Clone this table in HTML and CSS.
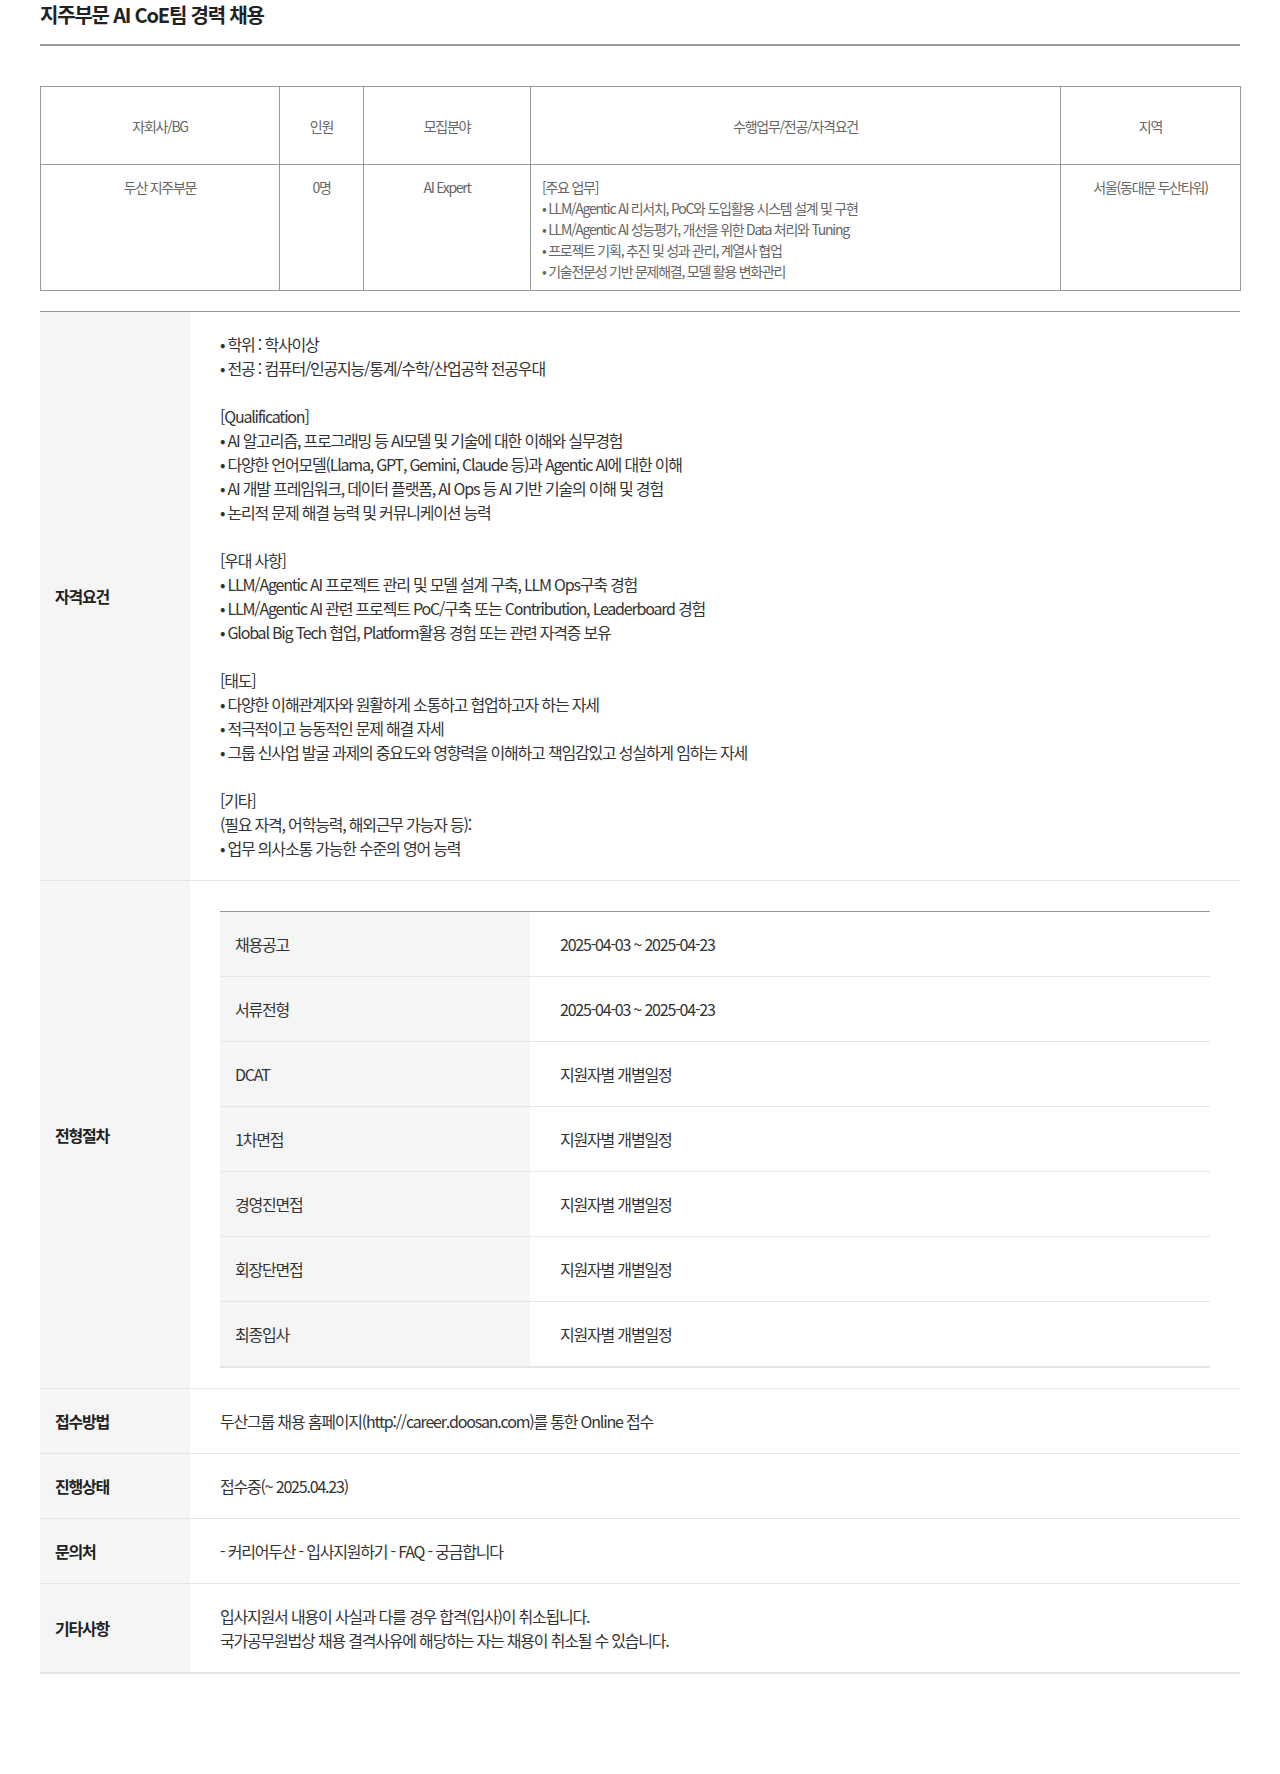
FILE: index.html
```html
<!DOCTYPE html>
<html lang="ko">
<head>
<meta charset="utf-8">
<title>지주부문 AI CoE팀 경력 채용</title>
<link rel="stylesheet" href="styles.css">
</head>
<body>
<div class="page">
  <h2 class="title">지주부문 AI CoE팀 경력 채용</h2>

  <table class="summary">
    <colgroup>
      <col class="c-company"><col class="c-count"><col class="c-field"><col class="c-duty"><col class="c-region">
    </colgroup>
    <thead>
      <tr>
        <th>자회사/BG</th>
        <th>인원</th>
        <th>모집분야</th>
        <th>수행업무/전공/자격요건</th>
        <th>지역</th>
      </tr>
    </thead>
    <tbody>
      <tr>
        <td>두산 지주부문</td>
        <td>0명</td>
        <td>AI Expert</td>
        <td class="duty">
          [주요 업무]<br>
          • LLM/Agentic AI 리서치, PoC와 도입활용 시스템 설계 및 구현<br>
          • LLM/Agentic AI 성능평가, 개선을 위한 Data 처리와 Tuning<br>
          • 프로젝트 기획, 추진 및 성과 관리, 계열사 협업<br>
          • 기술전문성 기반 문제해결, 모델 활용 변화관리
        </td>
        <td>서울(동대문 두산타워)</td>
      </tr>
    </tbody>
  </table>

  <table class="details">
    <tbody>
      <tr>
        <th>자격요건</th>
        <td>
          <div class="group">
            <p>• 학위 : 학사이상</p>
            <p>• 전공 : 컴퓨터/인공지능/통계/수학/산업공학 전공우대</p>
          </div>
          <div class="group">
            <p>[Qualification]</p>
            <p>• AI 알고리즘, 프로그래밍 등 AI모델 및 기술에 대한 이해와 실무경험</p>
            <p>• 다양한 언어모델(Llama, GPT, Gemini, Claude 등)과 Agentic AI에 대한 이해</p>
            <p>• AI 개발 프레임워크, 데이터 플랫폼, AI Ops 등 AI 기반 기술의 이해 및 경험</p>
            <p>• 논리적 문제 해결 능력 및 커뮤니케이션 능력</p>
          </div>
          <div class="group">
            <p>[우대 사항]</p>
            <p>• LLM/Agentic AI 프로젝트 관리 및 모델 설계 구축, LLM Ops구축 경험</p>
            <p>• LLM/Agentic AI 관련 프로젝트 PoC/구축 또는 Contribution, Leaderboard 경험</p>
            <p>• Global Big Tech 협업, Platform활용 경험 또는 관련 자격증 보유</p>
          </div>
          <div class="group">
            <p>[태도]</p>
            <p>• 다양한 이해관계자와 원활하게 소통하고 협업하고자 하는 자세</p>
            <p>• 적극적이고 능동적인 문제 해결 자세</p>
            <p>• 그룹 신사업 발굴 과제의 중요도와 영향력을 이해하고 책임감있고 성실하게 임하는 자세</p>
          </div>
          <div class="group">
            <p>[기타]</p>
            <p>(필요 자격, 어학능력, 해외근무 가능자 등):</p>
            <p>• 업무 의사소통 가능한 수준의 영어 능력</p>
          </div>
        </td>
      </tr>
      <tr>
        <th>전형절차</th>
        <td class="process-cell">
          <table class="process">
            <tbody>
              <tr><th>채용공고</th><td>2025-04-03 ~ 2025-04-23</td></tr>
              <tr><th>서류전형</th><td>2025-04-03 ~ 2025-04-23</td></tr>
              <tr><th>DCAT</th><td>지원자별 개별일정</td></tr>
              <tr><th>1차면접</th><td>지원자별 개별일정</td></tr>
              <tr><th>경영진면접</th><td>지원자별 개별일정</td></tr>
              <tr><th>회장단면접</th><td>지원자별 개별일정</td></tr>
              <tr><th>최종입사</th><td>지원자별 개별일정</td></tr>
            </tbody>
          </table>
        </td>
      </tr>
      <tr>
        <th>접수방법</th>
        <td>두산그룹 채용 홈페이지(http://career.doosan.com)를 통한 Online 접수</td>
      </tr>
      <tr>
        <th>진행상태</th>
        <td>접수중(~ 2025.04.23)</td>
      </tr>
      <tr>
        <th>문의처</th>
        <td>- 커리어두산 - 입사지원하기 - FAQ - 궁금합니다</td>
      </tr>
      <tr>
        <th>기타사항</th>
        <td>
          <p>입사지원서 내용이 사실과 다를 경우 합격(입사)이 취소됩니다.</p>
          <p>국가공무원법상 채용 결격사유에 해당하는 자는 채용이 취소될 수 있습니다.</p>
        </td>
      </tr>
    </tbody>
  </table>
</div>
</body>
</html>
```

FILE: styles.css
```css
* {
  box-sizing: border-box;
}

body {
  margin: 0;
  background: #fff;
  color: #333;
  font-family: "Noto Sans CJK KR", "Noto Sans", sans-serif;
}

.page {
  width: 1280px;
  padding: 0 40px 80px;
}

.title {
  margin: 0;
  padding-bottom: 14px;
  border-bottom: 2px solid #999;
  font-size: 20px;
  line-height: 30px;
  font-weight: 700;
  letter-spacing: -1.2px;
  color: #222;
}

/* summary table */
.summary {
  width: 100%;
  margin-top: 40px;
  border-collapse: collapse;
  table-layout: fixed;
  font-size: 14px;
  letter-spacing: -1.25px;
  color: #666;
}

.c-company { width: 239px; }
.c-count { width: 84px; }
.c-field { width: 167px; }
.c-duty { width: 530px; }
.c-region { width: 180px; }

.summary th,
.summary td {
  border: 1px solid #999;
}

.summary th {
  height: 78px;
  padding: 0 10px;
  font-weight: 400;
  text-align: center;
  vertical-align: middle;
}

.summary td {
  padding: 12px 10px 8px;
  line-height: 21px;
  text-align: center;
  vertical-align: top;
}

.summary td.duty {
  padding-left: 11px;
  text-align: left;
}

/* details table */
.details {
  width: 100%;
  margin-top: 20px;
  border-collapse: collapse;
  table-layout: fixed;
  border-top: 1px solid #999;
  border-bottom: 2px solid #e5e5e5;
  font-size: 16px;
  line-height: 24px;
  letter-spacing: -1.2px;
}

.details > tbody > tr > th {
  width: 150px;
  padding: 0 15px;
  background: #f5f5f5;
  color: #222;
  font-weight: 700;
  text-align: left;
  vertical-align: middle;
}

.details > tbody > tr > td {
  padding: 20px 30px;
  color: #333;
  vertical-align: top;
}

.details > tbody > tr + tr > th,
.details > tbody > tr + tr > td {
  border-top: 1px solid #e5e5e5;
}

.details p {
  margin: 0;
}

.group + .group {
  margin-top: 24px;
}

.details > tbody > tr > td.process-cell {
  padding: 30px 30px 20px;
}

/* process table */
.process {
  width: 100%;
  border-collapse: collapse;
  table-layout: fixed;
  border-top: 1px solid #999;
  border-bottom: 2px solid #e5e5e5;
}

.process th {
  width: 310px;
  padding: 20px 15px;
  background: #f5f5f5;
  color: #333;
  font-weight: 400;
  text-align: left;
}

.process td {
  padding: 20px 30px;
  color: #333;
}

.process tr + tr > th,
.process tr + tr > td {
  border-top: 1px solid #e5e5e5;
}
```
